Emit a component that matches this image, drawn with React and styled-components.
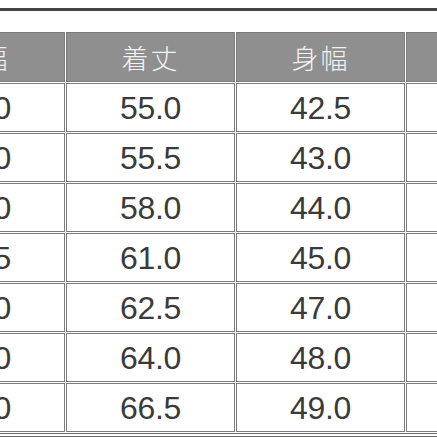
import React from 'react';
import styled, { createGlobalStyle } from 'styled-components';

const GlobalStyle = createGlobalStyle`
    html, body {
        margin: 0;
        padding: 0;
        background: #ffffff;
    }
    body {
        font-family: "Liberation Sans", "Noto Sans CJK JP", sans-serif;
    }
`;

const Page = styled.div`
    width: 437px;
    height: 437px;
    overflow: hidden;
    padding-top: 8px;
    box-sizing: border-box;
`;

// outer box: dark rule on top, double rule below, table cut by the frame
const Frame = styled.div`
    border-top: 3px solid #444444;
    border-bottom: 4px double #666666;
    padding-top: 20px;
    width: 437px;
    box-sizing: border-box;
    overflow: hidden;
`;

const Grid = styled.div`
    display: grid;
    grid-template-columns: repeat(4, 169px);
    grid-template-rows: 50px repeat(7, 49px);
    gap: 1px;
    padding: 1px;
    margin-left: -105px;
    width: max-content;
`;

const Cell = styled.div`
    box-sizing: border-box;
    display: flex;
    align-items: center;
    justify-content: center;
    border: 1px solid #7c7c7c;
    background: ${p => (p.$head ? '#8f8f8f' : '#ffffff')};
    color: ${p => (p.$head ? '#f2f2f2' : '#3a3a3a')};
    font-family: ${p => (p.$head
        ? '"Noto Sans CJK JP", "Liberation Sans", sans-serif'
        : '"Liberation Sans", "Noto Sans CJK JP", sans-serif')};
    font-size: ${p => (p.$head ? '27px' : '32px')};
    font-weight: ${p => (p.$head ? 300 : 400)};
    letter-spacing: ${p => (p.$head ? '2px' : '-0.3px')};
    line-height: 1;
    padding-top: ${p => (p.$head ? '0' : '1px')};
`;

const headers = ['肩幅', '着丈', '身幅', '袖丈'];

const rows = [
    ['40.0', '55.0', '42.5', '19.0'],
    ['41.0', '55.5', '43.0', '19.5'],
    ['42.0', '58.0', '44.0', '20.0'],
    ['43.5', '61.0', '45.0', '20.5'],
    ['45.0', '62.5', '47.0', '21.0'],
    ['46.0', '64.0', '48.0', '21.5'],
    ['47.0', '66.5', '49.0', '22.0'],
];

export default function App() {
    return (
        <Page>
            <GlobalStyle />
            <Frame>
                <Grid>
                    {headers.map(h => (
                        <Cell key={h} $head>{h}</Cell>
                    ))}
                    {rows.map((row, i) =>
                        row.map((v, j) => <Cell key={i + '-' + j}>{v}</Cell>)
                    )}
                </Grid>
            </Frame>
        </Page>
    );
}
